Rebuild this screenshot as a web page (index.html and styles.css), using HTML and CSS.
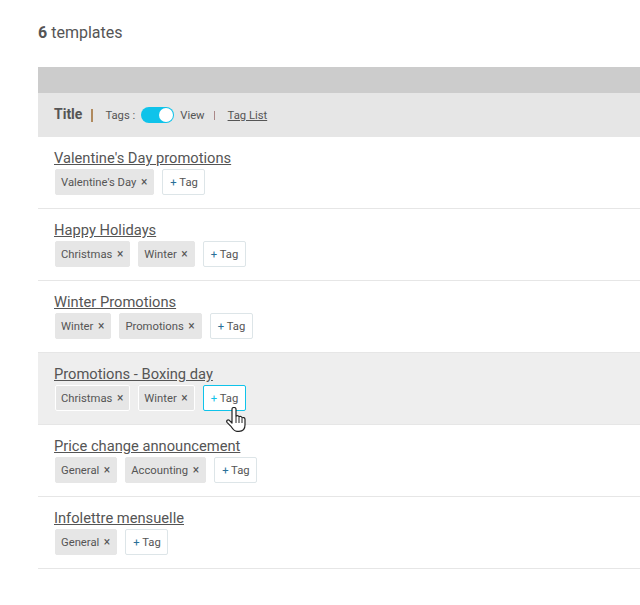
FILE: index.html
```html
<!DOCTYPE html>
<html lang="en">
<head>
    <meta charset="UTF-8">
    <title>Templates</title>
    <link rel="stylesheet" href="styles.css">
</head>
<body>
    <div class="count"><b>6</b> templates</div>

    <div class="table">
        <div class="top-bar"></div>
        <div class="table-head">
            <span class="head-title">Title</span>
            <span class="head-sep"></span>
            <span class="head-label">Tags :</span>
            <span class="toggle"><span class="knob"></span></span>
            <span class="head-label">View</span>
            <span class="head-sep-small"></span>
            <a class="head-link" href="#">Tag List</a>
        </div>

        <div class="row">
            <a class="row-title" href="#">Valentine's Day promotions</a>
            <div class="tags">
                <span class="tag">Valentine's Day <i>×</i></span>
                <span class="add-tag"><em>+</em> Tag</span>
            </div>
        </div>

        <div class="row">
            <a class="row-title" href="#">Happy Holidays</a>
            <div class="tags">
                <span class="tag">Christmas <i>×</i></span>
                <span class="tag">Winter <i>×</i></span>
                <span class="add-tag"><em>+</em> Tag</span>
            </div>
        </div>

        <div class="row">
            <a class="row-title" href="#">Winter Promotions</a>
            <div class="tags">
                <span class="tag">Winter <i>×</i></span>
                <span class="tag">Promotions <i>×</i></span>
                <span class="add-tag"><em>+</em> Tag</span>
            </div>
        </div>

        <div class="row hover">
            <a class="row-title" href="#">Promotions - Boxing day</a>
            <div class="tags">
                <span class="tag">Christmas <i>×</i></span>
                <span class="tag">Winter <i>×</i></span>
                <span class="add-tag">
                    <em>+</em> Tag
                    <svg class="cursor" width="20" height="25" viewBox="0 0 20 25">
                        <path d="M6 2c0-2 4-2 4 0v7.500c.8-1.200 3-1 3 .5 1-1.200 3-.6 3 1 1-1 3-.4 3 1.300V18c0 3.500-2 6.300-6 6.300h-2c-3 0-4.200-2-5.800-4.600L1 15.300c-1-1.700.8-3.200 2.300-2L6 16z" fill="#fff" stroke="#222" stroke-width="1.200" stroke-linejoin="round"/>
                        <path d="M10 10v6M13 10.500v5.500M16 11.500v4.500" stroke="#222" stroke-width="1" fill="none"/>
                    </svg>
                </span>
            </div>
        </div>

        <div class="row">
            <a class="row-title" href="#">Price change announcement</a>
            <div class="tags">
                <span class="tag">General <i>×</i></span>
                <span class="tag">Accounting <i>×</i></span>
                <span class="add-tag"><em>+</em> Tag</span>
            </div>
        </div>

        <div class="row">
            <a class="row-title" href="#">Infolettre mensuelle</a>
            <div class="tags">
                <span class="tag">General <i>×</i></span>
                <span class="add-tag"><em>+</em> Tag</span>
            </div>
        </div>
    </div>
</body>
</html>
```

FILE: styles.css
```css
html, body {
    overflow: hidden;
}

body {
    font-family: Roboto, Arial, sans-serif;
    color: #555;
    margin: 0;
    padding: 23px 0 0 38px;
    height: 605px;
    box-sizing: border-box;
    background-color: white;
}

.count {
    font-size: 16px;
    line-height: 19px;
    margin-bottom: 25px;
}

.top-bar {
    height: 26px;
    background-color: #ccc;
}

.table-head {
    height: 44px;
    background-color: #e6e6e6;
    display: flex;
    align-items: center;
    padding-left: 16px;
}

.head-title {
    font-size: 14px;
    font-weight: bold;
    margin-top: -2px;
}

.head-sep {
    width: 2px;
    height: 13px;
    background-color: #b08a5e;
    margin: 0 12px 0 9px;
}

.head-label {
    font-size: 11.25px;
}

.toggle {
    width: 33px;
    height: 16px;
    border-radius: 8px;
    background-color: #0fc3ea;
    margin: -1px 6px 0 6px;
    display: flex;
    justify-content: flex-end;
    align-items: center;
    padding-right: 1px;
    box-sizing: border-box;
}

.knob {
    width: 14px;
    height: 14px;
    border-radius: 50%;
    background-color: white;
}

.head-sep-small {
    width: 1px;
    height: 9px;
    background-color: #a88;
    margin: 0 13px 0 9px;
}

.head-link {
    font-size: 11.25px;
    color: #555;
}

.row {
    height: 72px;
    box-sizing: border-box;
    border-bottom: 1px solid #e6e6e6;
    padding: 12px 0 0 16px;
}

.row.hover {
    background-color: #eee;
}

.row-title {
    display: block;
    font-size: 14.7px;
    line-height: 18px;
    color: #555;
}

.tags {
    display: flex;
    gap: 8px;
    margin-top: 2px;
    padding-left: 1px;
}

.tag,
.add-tag {
    height: 26px;
    box-sizing: border-box;
    font-size: 11.25px;
    line-height: 24px;
    border-radius: 2px;
    white-space: nowrap;
}

.tag {
    background-color: #e6e6e6;
    border: 1px solid white;
    padding: 0 6px 0 5px;
}

.row:not(.hover) .tag {
    border-color: #e6e6e6;
}

.tag i {
    font-style: normal;
    font-size: 12px;
    margin-left: 1.800px;
}

.add-tag {
    position: relative;
    background-color: white;
    border: 1px solid #dde5e8;
    padding: 1px 6.500px 0 7px;
}

.add-tag em {
    font-style: normal;
    color: #2a6f97;
}

.hover .add-tag {
    border-color: #0fc3ea;
}

.hover .add-tag em {
    color: #0fc3ea;
}

.cursor {
    position: absolute;
    left: 22px;
    top: 21px;
}
```
